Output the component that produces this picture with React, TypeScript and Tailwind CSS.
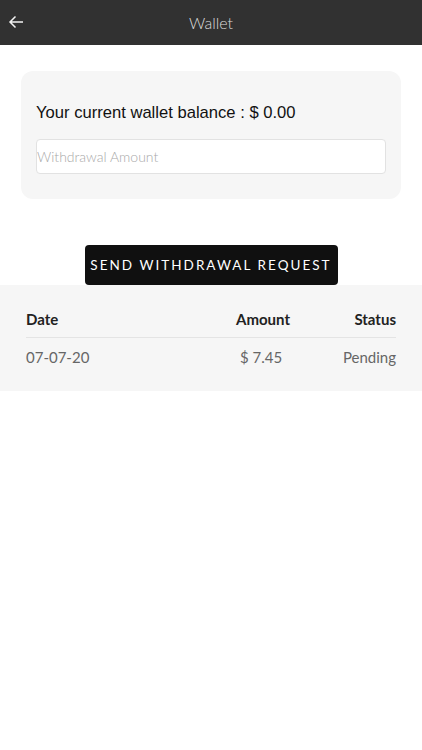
const Wallet = () => {
  return (
    <div className="min-h-[750px] bg-white" style={{ fontFamily: "Lato, sans-serif" }}>
      {/* top bar */}
      <div className="relative flex h-[45px] items-center justify-center bg-[#313131]">
        <button className="absolute left-[8px] top-[15px] text-[#f2f2f2]">
          <svg width="16" height="14" viewBox="0 0 16 14" fill="none" stroke="currentColor" strokeWidth="1.5">
            <path d="M15 7H2M7.5 1.5L2 7l5.5 5.5" />
          </svg>
        </button>
        <h1 className="text-[16px] font-light text-[#dcdcdc]">Wallet</h1>
      </div>

      {/* balance card */}
      <div className="px-[21px] pt-[26px]">
        <div className="rounded-[12px] bg-[#f6f6f6] px-[15px] pt-[30px] pb-[25px]">
          <p className="font-['Liberation_Sans',sans-serif] text-[16.6px] text-[#111]">
            Your current wallet balance : $ 0.00
          </p>
          <input
            placeholder="Withdrawal Amount"
            className="mt-[13px] h-[35px] w-full rounded-[4px] border border-[#e2e2e2] bg-white text-[14px] font-light text-[#333] outline-none placeholder:text-[#a8a8a8]"
          />
        </div>
      </div>

      {/* request button */}
      <div className="flex justify-center pt-[46px]">
        <button className="h-[40px] w-[253px] whitespace-nowrap rounded-[4px] bg-[#101010] text-[13.5px] tracking-[0.15em] text-white">
          SEND WITHDRAWAL REQUEST
        </button>
      </div>

      {/* history */}
      <div className="bg-[#f6f6f6] px-[26px] pt-[23px] pb-[22px]">
        <div className="grid grid-cols-[1fr_90px_106px] border-b border-[#e4e4e4] pb-[7px] text-[15px] font-bold text-[#222]">
          <span>Date</span>
          <span className="text-right">Amount</span>
          <span className="text-right">Status</span>
        </div>
        <div className="grid grid-cols-[1fr_90px_106px] pt-[8px] text-[15px] text-[#666]">
          <span>07-07-20</span>
          <span className="pl-[40px]">$ 7.45</span>
          <span className="text-right">Pending</span>
        </div>
      </div>
    </div>
  );
};

export default Wallet;
